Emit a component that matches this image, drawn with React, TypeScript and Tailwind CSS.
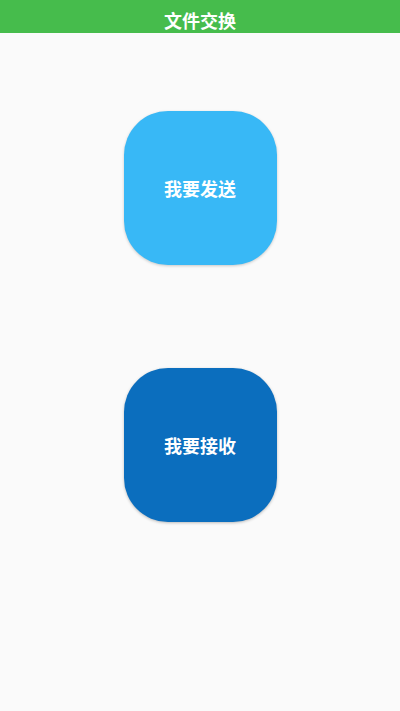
export default function App() {
    return (
        <div
            className="flex min-h-[711px] flex-col bg-[#fafafa]"
            style={{ fontFamily: '"Noto Sans CJK SC", "Noto Sans", sans-serif' }}
        >
            <div className="flex h-[33px] items-end justify-center bg-[#46bc4c] pb-[1px]">
                <span className="text-[18px] font-bold leading-[24px] text-white">文件交换</span>
            </div>
            <div className="flex flex-col items-center gap-[103px] pt-[78px]">
                <button className="flex h-[154px] w-[153px] items-center justify-center rounded-[44px] bg-[#38b8f6] shadow-[0_1px_3px_rgba(0,0,0,0.2)]">
                    <span className="text-[18px] font-bold text-white">我要发送</span>
                </button>
                <button className="flex h-[154px] w-[153px] items-center justify-center rounded-[44px] bg-[#0b6ebe] shadow-[0_1px_3px_rgba(0,0,0,0.25)]">
                    <span className="text-[18px] font-bold text-white">我要接收</span>
                </button>
            </div>
        </div>
    );
}
